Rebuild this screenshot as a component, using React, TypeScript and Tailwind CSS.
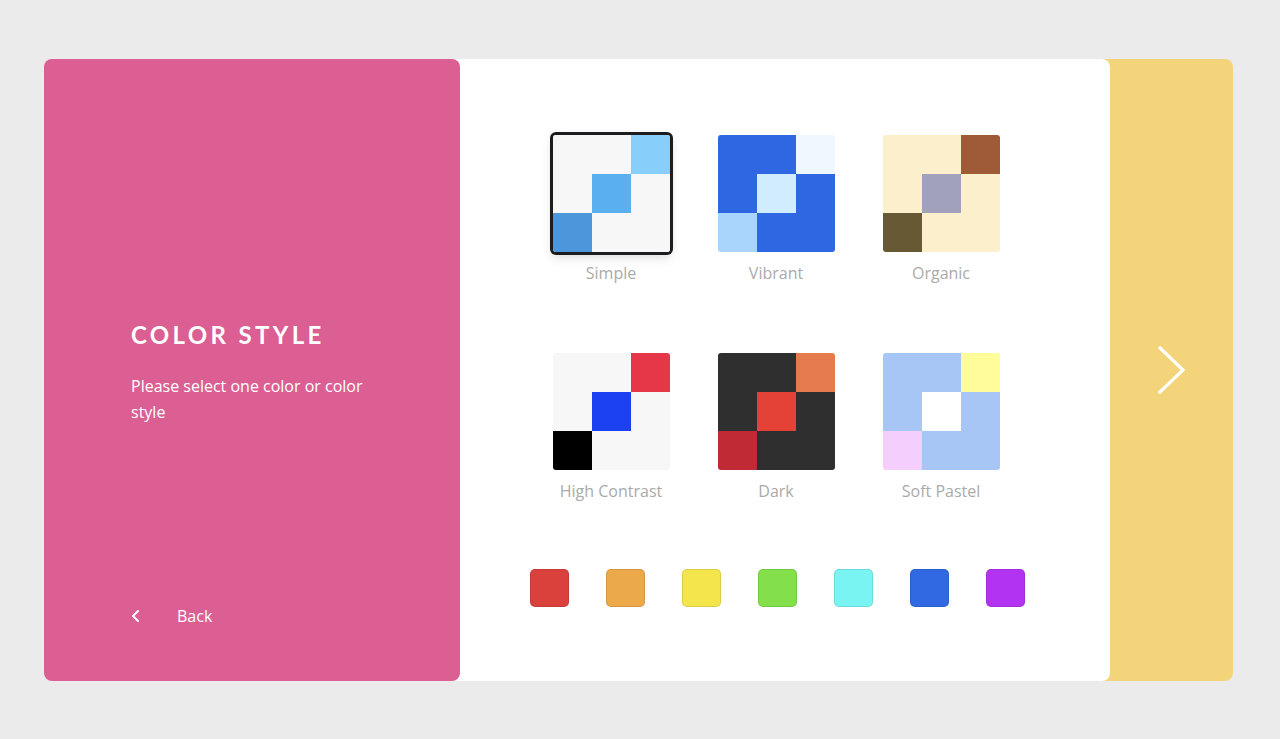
import {useState} from 'react';

type Style = {
  name: string;
  base: string;
  topRight: string;
  center: string;
  bottomLeft: string;
};

const STYLES: Style[] = [
  {name: 'Simple', base: '#f7f7f7', topRight: '#87cffa', center: '#5aaff0', bottomLeft: '#4d96dc'},
  {name: 'Vibrant', base: '#2f67e3', topRight: '#eff7ff', center: '#d0ecfd', bottomLeft: '#a9d4fb'},
  {name: 'Organic', base: '#fcf0cc', topRight: '#9f5a38', center: '#a2a1bc', bottomLeft: '#665933'},
  {name: 'High Contrast', base: '#f7f7f7', topRight: '#e63748', center: '#1b41f0', bottomLeft: '#000000'},
  {name: 'Dark', base: '#2f2f2f', topRight: '#e67c4e', center: '#e54237', bottomLeft: '#c02a35'},
  {name: 'Soft Pastel', base: '#a7c6f5', topRight: '#fffd99', center: '#ffffff', bottomLeft: '#f4cefc'},
];

const SWATCHES = ['#da413d', '#eba949', '#f4e54d', '#83e04a', '#7af4f3', '#3169e2', '#b234f2'];

function StyleTile({style, selected, onSelect}: {style: Style; selected: boolean; onSelect: () => void}) {
  // 3x3 grid, diagonal accent cells
  const cells = [
    style.base, style.base, style.topRight,
    style.base, style.center, style.base,
    style.bottomLeft, style.base, style.base,
  ];
  return (
    <button type="button" onClick={onSelect} className="flex flex-col items-center">
      <div
        className={
          selected
            ? 'grid size-[117px] grid-cols-3 grid-rows-3 overflow-hidden rounded-[3px] ring-3 ring-[#1d1d1f] shadow-[0_4px_12px_rgba(0,0,0,0.18)]'
            : 'grid size-[117px] grid-cols-3 grid-rows-3 overflow-hidden rounded-[3px]'
        }
      >
        {cells.map((c, i) => (
          <div key={i} style={{backgroundColor: c}}></div>
        ))}
      </div>
      <div className="mt-[10px] text-[16px] leading-[22px] text-[#aaaaaa]">{style.name}</div>
    </button>
  );
}

export default function App() {
  const [selected, setSelected] = useState('Simple');
  return (
    <div className="flex h-[739px] w-full bg-[#ebebeb] pt-[59px] pl-[44px] font-['Open_Sans',sans-serif]">
      <div className="relative z-30 flex h-[622px] w-[416px] flex-col rounded-[8px] bg-[#db5f93] pt-[260px] pb-[53px] pl-[87px] text-white">
        <h1 className="font-['Lato',sans-serif] text-[24px] leading-[32px] font-bold tracking-[0.14em]">COLOR STYLE</h1>
        <p className="mt-[22px] w-[250px] text-[16px] leading-[26px]">Please select one color or color style</p>
        <button type="button" className="mt-auto flex h-6 items-center text-[16px]">
          <svg width="9" height="14" viewBox="0 0 9 14" fill="none" stroke="white" strokeWidth="2" strokeLinecap="round" strokeLinejoin="round">
            <polyline points="7,2 2,7 7,12" />
          </svg>
          <span className="ml-[37px]">Back</span>
        </button>
      </div>

      <div className="relative z-20 -ml-[18px] flex h-[622px] w-[668px] flex-col items-center rounded-[8px] bg-white pt-[76px]">
        <div className="grid grid-cols-[117px_117px_117px] gap-x-[48px] gap-y-[69px]">
          {STYLES.map((s) => (
            <StyleTile key={s.name} style={s} selected={selected === s.name} onSelect={() => setSelected(s.name)} />
          ))}
        </div>
        <div className="mt-[67px] ml-[2px] flex gap-[37px]">
          {SWATCHES.map((c) => (
            <div key={c} className="h-[38px] w-[39px] rounded-[5px] border border-black/10" style={{backgroundColor: c}}></div>
          ))}
        </div>
      </div>

      <div className="relative z-10 -ml-[20px] flex h-[622px] w-[143px] items-center justify-center rounded-[8px] bg-[#f3d47b] pl-[20px]">
        <svg width="30" height="50" viewBox="0 0 30 50" fill="none" stroke="white" strokeWidth="3.2" strokeLinecap="square">
          <polyline points="3,3 26,25 3,47" />
        </svg>
      </div>
    </div>
  );
}
